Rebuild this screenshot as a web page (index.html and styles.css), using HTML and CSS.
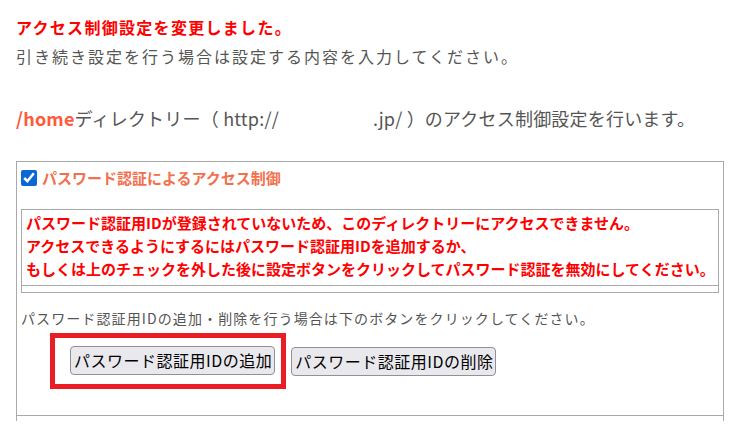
FILE: index.html
```html
<!DOCTYPE html>
<html lang="ja">
<head>
    <meta charset="UTF-8">
    <meta name="viewport" content="width=device-width, initial-scale=1.0">
    <title>アクセス制御設定</title>
    <link rel="stylesheet" href="styles.css">
</head>
<body>
    <div class="page">
        <p class="done">アクセス制御設定を変更しました。</p>
        <p class="lead">引き続き設定を行う場合は設定する内容を入力してください。</p>

        <p class="target"><span class="dir">/home</span>ディレクトリー（ http://<span class="domain"></span>.jp/ ）のアクセス制御設定を行います。</p>

        <div class="panel">
            <div class="panel-body">
                <label class="check">
                    <input type="checkbox" checked>
                    <span>パスワード認証によるアクセス制御</span>
                </label>

                <div class="notice">
                    <div class="notice-text">
                        パスワード認証用IDが登録されていないため、このディレクトリーにアクセスできません。<br>
                        アクセスできるようにするにはパスワード認証用IDを追加するか、<br>
                        もしくは上のチェックを外した後に設定ボタンをクリックしてパスワード認証を無効にしてください。
                    </div>
                    <div class="notice-spacer"></div>
                </div>

                <p class="hint">パスワード認証用IDの追加・削除を行う場合は下のボタンをクリックしてください。</p>

                <div class="buttons">
                    <div class="mark">
                        <button type="button">パスワード認証用IDの追加</button>
                    </div>
                    <button type="button">パスワード認証用IDの削除</button>
                </div>
            </div>
            <div class="panel-next"></div>
        </div>
    </div>
</body>
</html>
```

FILE: styles.css
```css
body {
    margin: 0;
    background-color: #ffffff;
    font-family: "Noto Sans CJK JP", "Open Sans", sans-serif;
    color: #555555;
}

.page {
    padding: 15px 16px 0 16px;
}

p {
    margin: 0;
}

.done {
    color: #ff0000;
    font-weight: bold;
    font-size: 16px;
    line-height: 24px;
    letter-spacing: 1.3px;
}

.lead {
    font-size: 16px;
    line-height: 34px;
    letter-spacing: 2px;
}

.target {
    margin-top: 31px;
    font-size: 18px;
    line-height: 28px;
    letter-spacing: 0.2px;
}

.dir {
    color: #ff5a3c;
    font-weight: bold;
}

.domain {
    display: inline-block;
    width: 94px;
}

.panel {
    margin-top: 29px;
    width: 706px;
    border: 1px solid #aaaaaa;
    border-bottom: none;
}

.panel-body {
    padding: 6px 4px 26px 4px;
    border-bottom: 1px solid #aaaaaa;
}

.panel-next {
    height: 5px;
}

.check {
    display: flex;
    align-items: center;
    gap: 5px;
    height: 19px;
    color: #f2704d;
    font-weight: bold;
    font-size: 15px;
}

.check input {
    margin: 0;
    width: 16px;
    height: 16px;
    accent-color: #0b67d6;
}

.notice {
    margin-top: 22px;
    border: 1px solid #aaaaaa;
}

.notice-text {
    padding: 1px 4px 5px 4px;
    border-bottom: 1px solid #aaaaaa;
    color: #ff0000;
    font-weight: bold;
    font-size: 15px;
    line-height: 23px;
    white-space: nowrap;
    letter-spacing: 0;
}

.notice-spacer {
    height: 6px;
}

.hint {
    margin-top: 15px;
    font-size: 14px;
    line-height: 20px;
    letter-spacing: 1.1px;
}

.buttons {
    display: flex;
    align-items: center;
    gap: 5px;
    margin-top: 5px;
    margin-left: 29px;
}

.mark {
    border: 5px solid #ea1c24;
    padding: 8px 6px 9px 15px;
}

button {
    font-family: "Noto Sans CJK JP", sans-serif;
    font-size: 16px;
    line-height: 21px;
    letter-spacing: 0.5px;
    color: #000000;
    background-color: #e9e9ed;
    border: 1px solid #8f8f9d;
    border-radius: 4px;
    padding: 3px 2px 3px 3px;
}
```
